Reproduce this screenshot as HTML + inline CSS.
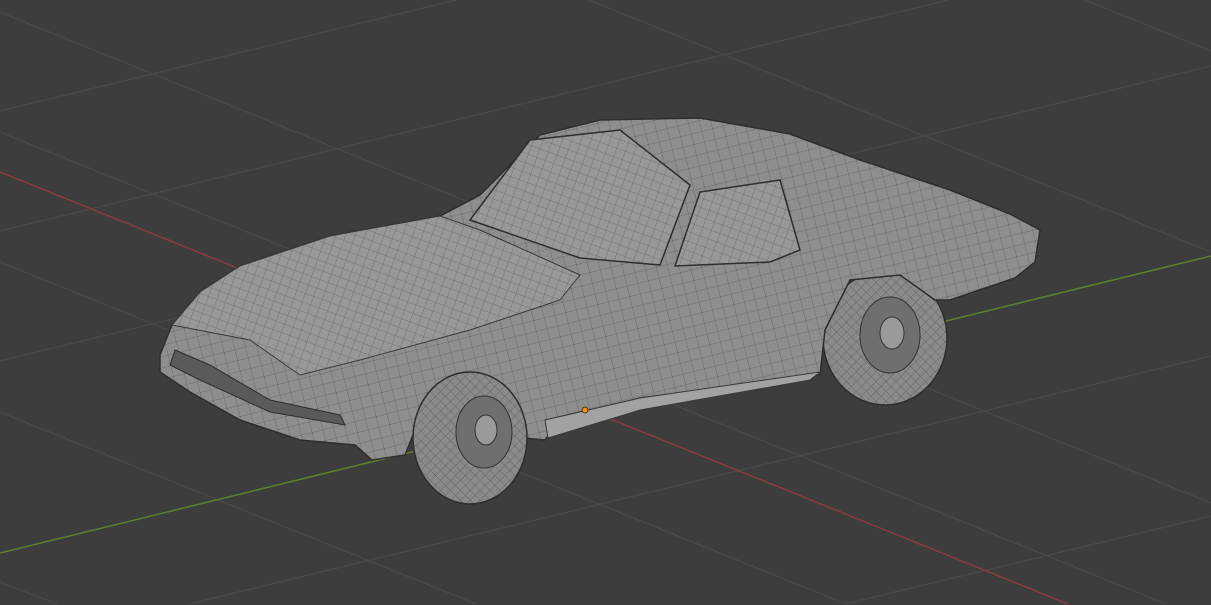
<!DOCTYPE html>
<html><head><meta charset="utf-8"><style>
html,body{margin:0;padding:0;background:#3d3d3d;overflow:hidden;width:1211px;height:605px}
svg{display:block;position:absolute;left:0;top:0}
</style></head><body>
<svg width="1211" height="605" viewBox="0 0 1211 605" xmlns="http://www.w3.org/2000/svg">
<defs>
<pattern id="mesh" width="11" height="11" patternUnits="userSpaceOnUse" patternTransform="rotate(-14)">
<rect width="11" height="11" fill="#8e8e8e"/>
<path d="M0 0H11M0 0V11" stroke="#626262" stroke-width="0.8"/>
</pattern>
<pattern id="mesh2" width="9" height="9" patternUnits="userSpaceOnUse" patternTransform="rotate(20)">
<rect width="9" height="9" fill="#989898"/>
<path d="M0 0H9M0 0V9" stroke="#6a6a6a" stroke-width="0.8"/>
</pattern>
<pattern id="tire" width="7" height="7" patternUnits="userSpaceOnUse" patternTransform="rotate(45)">
<rect width="7" height="7" fill="#8a8a8a"/>
<path d="M0 0H7M0 0V7" stroke="#5a5a5a" stroke-width="0.8"/>
</pattern>
</defs>
<rect width="1211" height="605" fill="#3d3d3d"/>
<g stroke="#4a4a4a" stroke-width="1.2">
<line x1="0" y1="12" x2="1211" y2="503"/>
<line x1="0" y1="132" x2="1166" y2="604"/>
<line x1="0" y1="262" x2="846" y2="604"/>
<line x1="0" y1="412" x2="476" y2="604"/>
<line x1="0" y1="582" x2="57" y2="604"/>
<line x1="589" y1="0" x2="1211" y2="252"/>
<line x1="1085" y1="0" x2="1211" y2="51"/>
<line x1="0" y1="111" x2="456" y2="0"/>
<line x1="0" y1="231" x2="948" y2="0"/>
<line x1="0" y1="361" x2="1211" y2="66"/>
<line x1="189" y1="604" x2="1211" y2="356"/>
<line x1="845" y1="604" x2="1211" y2="516"/>
</g>
<line x1="0" y1="172" x2="1068" y2="604" stroke="#8a3a42" stroke-width="1.5"/>
<line x1="0" y1="553" x2="1211" y2="256" stroke="#5f7f2a" stroke-width="1.5"/>
<ellipse cx="885" cy="338" rx="62" ry="67" fill="url(#tire)" stroke="#2d2d2d" stroke-width="1.5"/>
<ellipse cx="890" cy="335" rx="30" ry="38" fill="#6f6f6f" stroke="#333"/>
<ellipse cx="892" cy="333" rx="12" ry="16" fill="#9a9a9a" stroke="#333"/>
<path d="M160 355 L172 325 L200 292 L240 266 L330 236 L440 216 L480 195 L540 135 L600 120 L700 118 L790 134 L860 160 L950 190 L1010 214 L1040 230 L1035 262 L1015 278 L950 300 L935 300 L900 275 L850 280 L825 330 L820 375 L640 398 L560 420 L545 440 L525 438 L500 395 L470 382 L440 392 L415 430 L405 455 L372 460 L355 445 L300 440 L240 420 L190 392 L160 372 Z" fill="url(#mesh)" stroke="#2e2e2e" stroke-width="1.5"/>
<path d="M172 325 L200 292 L240 266 L330 236 L440 216 L480 230 L580 275 L560 300 L470 330 L360 360 L300 375 L250 340 Z" fill="url(#mesh2)" stroke="#3a3a3a"/>
<path d="M470 220 L530 140 L620 130 L690 185 L660 265 L580 258 Z" fill="url(#mesh2)" stroke="#2e2e2e" stroke-width="1.5"/>
<path d="M675 266 L700 192 L780 180 L800 250 L770 262 Z" fill="url(#mesh2)" stroke="#2e2e2e" stroke-width="1.5"/>
<path d="M545 420 L640 398 L820 372 L810 380 L640 410 L548 438 Z" fill="#a2a2a2" stroke="#3a3a3a"/>
<path d="M175 350 L210 365 L270 400 L340 415 L345 425 L270 412 L200 380 L170 365 Z" fill="#5a5a5a" stroke="#2e2e2e"/>
<ellipse cx="470" cy="438" rx="57" ry="66" fill="url(#tire)" stroke="#2d2d2d" stroke-width="1.5"/>
<ellipse cx="484" cy="432" rx="28" ry="36" fill="#6f6f6f" stroke="#333"/>
<ellipse cx="486" cy="430" rx="11" ry="15" fill="#9a9a9a" stroke="#333"/>
<circle cx="585" cy="410" r="3" fill="#f0900a" stroke="#222" stroke-width="0.8"/>
</svg>
</body></html>
